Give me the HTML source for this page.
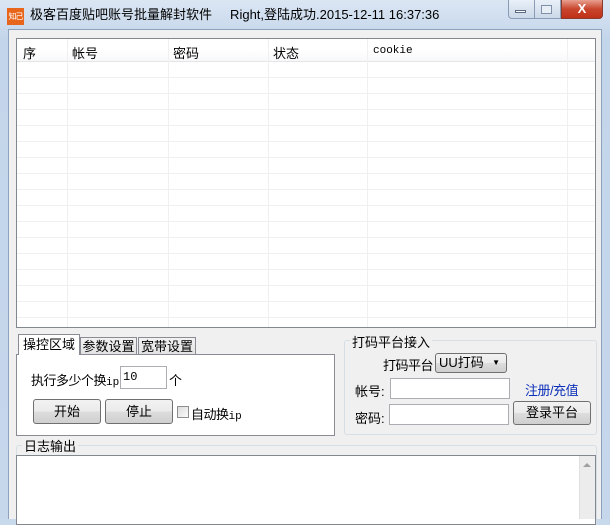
<!DOCTYPE html>
<html><head><meta charset="utf-8"><style>
*{margin:0;padding:0;box-sizing:border-box}
body{width:610px;height:519px;overflow:hidden;position:relative;background:#c9d9ec;font-family:"Liberation Sans","Noto Sans CJK SC",sans-serif;font-size:12px;color:#000}
.a{position:absolute;white-space:nowrap}
.frame{left:0;top:0;width:610px;height:519px;background:linear-gradient(#dbe6f3,#c3d5ea 40px,#c6d7ec);}
.client{left:8px;top:29px;width:594px;height:490px;background:#f0f0f0;border:1px solid #8da2bd;border-bottom:none}
.btn{background:linear-gradient(#f2f2f2,#ebebeb 50%,#dddddd 51%,#cfcfcf);border:1px solid #707070;border-radius:3px;text-align:center;font-size:13px}
.inp{background:#fff;border:1px solid #abadb3}
.vl{width:1px;background:#f0f0f0}
</style></head><body>
<div class="a frame"></div>
<div class="a" style="left:7px;top:8px;width:17px;height:17px;background:#e8661c;color:#fff;font-size:8px;line-height:17px;text-align:center;letter-spacing:-1px;overflow:hidden">知己</div>
<div class="a" style="left:30px;top:6px;font-size:13px;line-height:18px">极客百度贴吧账号批量解封软件&nbsp;&nbsp;&nbsp;&nbsp;&nbsp;Right,登陆成功.2015-12-11 16:37:36</div>
<div class="a" style="left:508px;top:0;width:53px;height:19px;border:1px solid #8a9cb5;border-top:none;border-radius:0 0 0 4px;background:linear-gradient(#e9f0f8,#cbd8e8)"></div>
<div class="a" style="left:534px;top:0;width:1px;height:19px;background:#8a9cb5"></div>
<div class="a" style="left:515px;top:10px;width:11px;height:3px;border:1px solid #5a6a80;background:#fff"></div>
<div class="a" style="left:541px;top:5px;width:11px;height:9px;border:1px solid #8090a8;background:#e8eef6"></div>
<div class="a" style="left:561px;top:0;width:42px;height:19px;border:1px solid #8a3a2a;border-top:none;border-radius:0 0 4px 0;background:linear-gradient(#e8a090,#c8452c 50%,#c03018);color:#fff;font-weight:bold;font-size:13px;text-align:center;line-height:17px">X</div>
<div class="a client"></div>
<div class="a" style="left:16px;top:38px;width:580px;height:290px;background:#fff;border:1px solid #828790"></div>
<div class="a" style="left:17px;top:39px;width:578px;height:23px;background:linear-gradient(#fff,#fff 50%,#f7f8fa);border-bottom:1px solid #e5e5e5"></div>
<div class="a" style="left:23px;top:43px;font-size:13px">序</div>
<div class="a" style="left:72px;top:43px;font-size:13px">帐号</div>
<div class="a" style="left:173px;top:43px;font-size:13px">密码</div>
<div class="a" style="left:273px;top:43px;font-size:13px">状态</div>
<div class="a" style="left:373px;top:45px;font-family:'Liberation Mono',monospace;font-size:11px">cookie</div>
<div class="a" style="left:17px;top:62px;width:578px;height:265px;background:repeating-linear-gradient(to bottom,transparent 0,transparent 15px,#f0f0f0 15px,#f0f0f0 16px)"></div>
<div class="a vl" style="left:67px;top:39px;height:288px"></div>
<div class="a vl" style="left:168px;top:39px;height:288px"></div>
<div class="a vl" style="left:268px;top:39px;height:288px"></div>
<div class="a vl" style="left:367px;top:39px;height:288px"></div>
<div class="a vl" style="left:567px;top:39px;height:288px"></div>
<div class="a" style="left:16px;top:354px;width:319px;height:82px;background:#fff;border:1px solid #898c95"></div>
<div class="a" style="left:80px;top:337px;width:57px;height:18px;border:1px solid #898c95;background:linear-gradient(#f2f2f2,#e3e3e3);font-size:13px;text-align:center;line-height:17px">参数设置</div>
<div class="a" style="left:138px;top:337px;width:58px;height:18px;border:1px solid #898c95;background:linear-gradient(#f2f2f2,#e3e3e3);font-size:13px;text-align:center;line-height:17px">宽带设置</div>
<div class="a" style="left:18px;top:334px;width:62px;height:21px;border:1px solid #898c95;border-bottom:none;background:#fff;font-size:13px;text-align:center;line-height:20px">操控区域</div>
<div class="a" style="left:31px;top:370px;font-size:13px;letter-spacing:-0.5px">执行多少个换<span style="font-family:'Liberation Mono',monospace;font-size:11px;letter-spacing:0">ip</span></div>
<div class="a inp" style="left:120px;top:366px;width:47px;height:23px;font-family:'Liberation Mono',monospace;font-size:12px;padding:3px 2px">10</div>
<div class="a" style="left:169px;top:370px;font-size:13px">个</div>
<div class="a btn" style="left:33px;top:399px;width:68px;height:25px;line-height:23px">开始</div>
<div class="a btn" style="left:105px;top:399px;width:68px;height:25px;line-height:23px">停止</div>
<div class="a" style="left:177px;top:406px;width:12px;height:12px;border:1px solid #8e8f8f;background:linear-gradient(135deg,#dcdcdc,#fbfbfb)"></div>
<div class="a" style="left:191px;top:404px;font-size:13px;letter-spacing:-0.5px">自动换<span style="font-family:'Liberation Mono',monospace;font-size:11px;letter-spacing:0">ip</span></div>
<div class="a" style="left:344px;top:340px;width:253px;height:95px;border:1px solid #d5dfe5;border-radius:3px"></div>
<div class="a" style="left:350px;top:332px;padding:0 2px;background:#f0f0f0;font-size:13px">打码平台接入</div>
<div class="a" style="left:383px;top:355px;font-size:13px;letter-spacing:-0.5px">打码平台</div>
<div class="a btn" style="left:435px;top:353px;width:72px;height:20px;text-align:left;padding-left:3px;line-height:18px;font-size:13px">UU打码<span style="position:absolute;right:6px;top:0;font-size:8px">▼</span></div>
<div class="a" style="left:355px;top:381px;font-size:13px">帐号:</div>
<div class="a inp" style="left:390px;top:378px;width:120px;height:21px"></div>
<div class="a" style="left:525px;top:380px;font-size:13px;color:#0b2fb8;letter-spacing:-0.5px">注册/充值</div>
<div class="a" style="left:355px;top:408px;font-size:13px">密码:</div>
<div class="a inp" style="left:389px;top:404px;width:120px;height:21px"></div>
<div class="a btn" style="left:513px;top:401px;width:78px;height:24px;line-height:22px">登录平台</div>
<div class="a" style="left:16px;top:445px;width:581px;height:80px;border:1px solid #d5dfe5;border-radius:3px"></div>
<div class="a" style="left:22px;top:436px;padding:0 2px;background:#f0f0f0;font-size:13px">日志输出</div>
<div class="a" style="left:16px;top:455px;width:580px;height:70px;background:#fff;border:1px solid #828790"></div>
<div class="a" style="left:579px;top:456px;width:16px;height:63px;background:#ececec;border-left:1px solid #e0e0e0"></div>
<div class="a" style="left:583px;top:463px;width:0;height:0;border-left:4px solid transparent;border-right:4px solid transparent;border-bottom:4px solid #a0a0a0"></div>
</body></html>
